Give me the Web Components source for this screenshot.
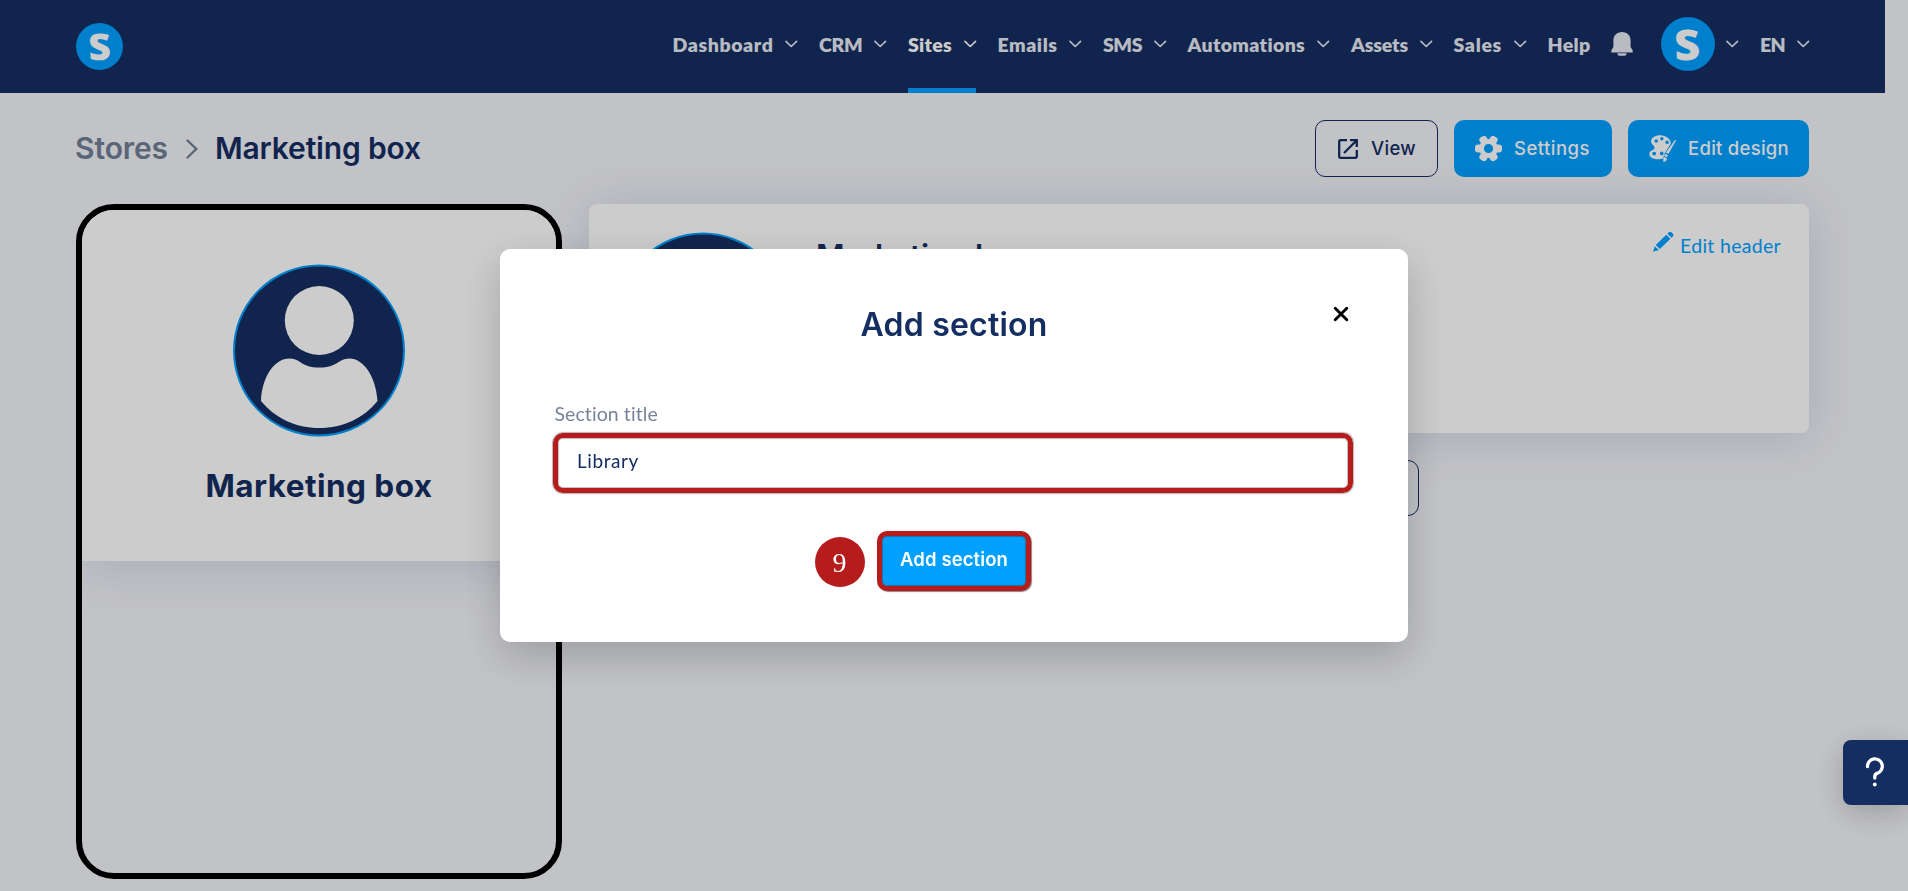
<!DOCTYPE html>
<html lang="en">
<head>
<meta charset="UTF-8">
<title>Marketing box</title>
<style>
    body {
        margin: 0;
        height: 891px;
        overflow: hidden;
        background: #f3f4f9;
        color: #152e62;
        font-family: Inter, sans-serif;
        --navy: #152e62;
        --blue: #00a0ff;
        --red: #b71c1c;
        --round-font: Lato, sans-serif;
    }
</style>
</head>
<body>
<store-page></store-page>
<page-backdrop></page-backdrop>
<section-modal heading="Add section"></section-modal>
<help-tab></help-tab>

<script>
const ICONS = {
    chevron: '<svg viewBox="0 0 13 8"><path d="M1 1.2 6.5 6.6 12 1.2" fill="none" stroke="currentColor" stroke-width="1.7" stroke-linecap="round" stroke-linejoin="round"/></svg>',
    crumb: '<svg viewBox="0 0 12 20"><path d="M1.5 1.5 10.3 10 1.5 18.5" fill="none" stroke="currentColor" stroke-width="2.4" stroke-linecap="round"/></svg>',
    bell: '<svg viewBox="0 0 22 24"><path d="M11 0C6 0 2.4 3.5 2.4 8.5v6.5L0.3 18.5V20.5H21.7V18.5L19.6 15V8.5C19.6 3.5 16 0 11 0ZM6.3 21.3h9.4q-.1 2.5-2.3 2.5H8.6q-2.2 0-2.3-2.5Z" fill="currentColor"/></svg>',
    view: '<svg viewBox="0 0 20 20"><path d="M9 1.2H2.2Q1.2 1.2 1.2 2.2V17.8Q1.2 18.8 2.2 18.8H17.8Q18.8 18.8 18.8 17.8V11M12 1.2H18.8V8M18.3 1.7 6 14" fill="none" stroke="currentColor" stroke-width="2.3"/></svg>',
    gear: '<svg viewBox="0 0 27 26"><g fill="currentColor"><path fill-rule="evenodd" d="M13.5 3.5a9.5 9.5 0 1 0 0 19a9.5 9.5 0 0 0 0-19Zm0 4.9a4.6 4.6 0 1 1 0 9.2a4.6 4.6 0 0 1 0-9.2Z"/><rect x="0" y="9" width="7" height="8" rx="3"/><rect x="20" y="9" width="7" height="8" rx="3"/><rect x="0" y="9" width="7" height="8" rx="3" transform="rotate(60 13.5 13)"/><rect x="20" y="9" width="7" height="8" rx="3" transform="rotate(60 13.5 13)"/><rect x="0" y="9" width="7" height="8" rx="3" transform="rotate(-60 13.5 13)"/><rect x="20" y="9" width="7" height="8" rx="3" transform="rotate(-60 13.5 13)"/></g></svg>',
    palette: '<svg viewBox="0 0 28 28"><path fill="currentColor" fill-rule="evenodd" d="M11.5.3C6.5.3 2.2 2.8 2.2 6.7c0 3.5 3.6 4 3.6 6.5 0 2.6-5.5 2.6-5.5 6.5 0 3.5 4.5 5.5 9.5 5.5 2 0 3.5-.5 4.7-1.1L16 19.6l1.1-2 5.5-8.5C22.7 4 17.5.3 11.5.3ZM7.5 4.300a1.9 1.9 0 1 1 0 3.8a1.9 1.9 0 0 1 0-3.8Zm5.8-2.1a1.8 1.8 0 1 1 0 3.6a1.8 1.8 0 0 1 0-3.6Zm5.5 3.5a1.9 1.9 0 1 1 0 3.8a1.9 1.9 0 0 1 0-3.8ZM5.4 17.300a2 2 0 1 1 0 4a2 2 0 0 1 0-4Zm7.8-.1a1.9 1.9 0 1 1 0 3.8a1.9 1.9 0 0 1 0-3.8Z"/><path d="M27 5 28 5.7 20 19.7 17.6 18.2ZM17 19.4 19.5 21 18.6 23 15.6 21.5ZM15.2 22.5 18.4 24.2C19 26 17.6 28 14.6 27.8 15.5 26 14.3 24.5 15.2 22.5Z" fill="currentColor"/></svg>',
    pencil: '<svg viewBox="0 0 22 22"><path d="M16.3 1.6Q18 .1 19.6 1.5L20.8 2.8Q22.2 4.3 20.7 5.8L19.4 7.1 15 2.900ZM13.9 4 18.2 8.2 7.2 18.9 2.9 14.7ZM1.9 15.9 6.1 20 0 21.8Z" fill="currentColor"/></svg>',
    close: '<svg viewBox="0 0 16 16"><path d="M2.2 2.2 13.8 13.8M13.8 2.2 2.2 13.8" stroke="currentColor" stroke-width="2.9" stroke-linecap="round"/></svg>',
    help: '<svg viewBox="0 0 18 30"><path d="M1.5 9.500A7.4 7.4 0 1 1 11.5 16.2Q8.8 17 8.8 19.5V21" fill="none" stroke="currentColor" stroke-width="3.3" stroke-linecap="round"/><circle cx="8.8" cy="27.5" r="1.9" fill="currentColor"/></svg>'
};

class BaseElement extends HTMLElement {
    constructor() {
        super();
        this.attachShadow({ mode: 'open' });
    }

    connectedCallback() {
        this.shadowRoot.innerHTML = this.template();
    }
}

class UiIcon extends BaseElement {
    template() {
        return `
            <style>
                :host { display: block; flex: none; }
                svg { display: block; width: 100%; height: 100%; overflow: visible; }
            </style>
            ${ICONS[this.getAttribute('name')]}
        `;
    }
}

// One line of text, tracked so that it takes the given width
class FitText extends BaseElement {
    template() {
        return `
            <style>
                :host { display: block; flex: none; white-space: nowrap; }
                span { display: inline-block; }
            </style>
            <span><slot></slot></span>
        `;
    }

    connectedCallback() {
        super.connectedCallback();
        const width = Number(this.getAttribute('width'));
        const span = this.shadowRoot.querySelector('span');
        const count = this.textContent.length;
        const natural = span.getBoundingClientRect().width;
        span.style.letterSpacing = `${(width - natural) / count}px`;
        this.style.width = `${width}px`;
    }
}

class BrandMark extends BaseElement {
    template() {
        return `
            <style>
                :host {
                    display: flex;
                    flex: none;
                    align-items: center;
                    justify-content: center;
                    width: var(--size, 47px);
                    height: var(--size, 47px);
                    border-radius: 50%;
                    background: var(--blue);
                    color: #fff;
                    font: 800 calc(var(--size, 47px) * 0.78)/1 "Open Sans", sans-serif;
                }
                span { transform: skewX(3deg) scaleX(1.06); }
            </style>
            <span>S</span>
        `;
    }
}

class NavItem extends BaseElement {
    template() {
        return `
            <style>
                :host {
                    display: flex;
                    align-items: center;
                    gap: 11.5px;
                    height: 93px;
                    box-sizing: border-box;
                    color: #e6eaf2;
                    font: 800 19.5px/24px var(--round-font);
                }
                :host([active]) { color: #fff; box-shadow: inset 0 -5px var(--blue); }
                ::slotted(fit-text) { margin-top: -3px; }
                ui-icon { width: 12.5px; height: 8px; margin-top: -5px; }
            </style>
            <slot></slot>
            ${this.hasAttribute('plain') ? '' : '<ui-icon name="chevron"></ui-icon>'}
        `;
    }
}

class AppHeader extends BaseElement {
    template() {
        const items = [
            ['Dashboard', 101], ['CRM', 43.5], ['Sites', 44], ['Emails', 60], ['SMS', 39],
            ['Automations', 118], ['Assets', 57], ['Sales', 48.5], ['Help', 43]
        ];
        const links = items.map(([label, width]) => `
            <nav-item ${label === 'Sites' ? 'active' : ''} ${label === 'Help' ? 'plain' : ''}>
                <fit-text width="${width}">${label}</fit-text>
            </nav-item>`).join('');
        return `
            <style>
                :host {
                    display: flex;
                    align-items: center;
                    justify-content: space-between;
                    box-sizing: border-box;
                    width: 1885px;
                    height: 93px;
                    padding: 0 76px;
                    background: var(--navy);
                }
                nav { display: flex; align-items: center; gap: 21.5px; }
                .bell { width: 22px; height: 24px; margin: -5px 6px 0 -1px; color: #e6eaf2; }
                .avatar { --size: 54px; margin-top: -5px; }
            </style>
            <brand-mark></brand-mark>
            <nav>
                ${links}
                <ui-icon class="bell" name="bell"></ui-icon>
                <nav-item><brand-mark class="avatar"></brand-mark></nav-item>
                <nav-item><fit-text width="25">EN</fit-text></nav-item>
            </nav>
        `;
    }
}

class ActionButton extends BaseElement {
    template() {
        return `
            <style>
                :host {
                    display: flex;
                    align-items: center;
                    box-sizing: border-box;
                    height: 57px;
                    padding: 0 21px;
                    border-radius: 10px;
                    background: var(--blue);
                    color: #fff;
                    font: 500 18.5px/24px Inter, sans-serif;
                }
                :host([outline]) { border: 1px solid var(--navy); background: none; color: var(--navy); }
                ::slotted(fit-text) { margin-top: -2px; }
                ui-icon { width: 27px; height: 27px; margin-right: 12px; }
                :host([outline]) ui-icon { width: 20px; height: 20px; margin: 0 13px 0 1px; }
            </style>
            <ui-icon name="${this.getAttribute('icon')}"></ui-icon><slot></slot>
        `;
    }
}

class UserAvatar extends BaseElement {
    template() {
        return `
            <style>
                :host { display: block; flex: none; width: 172px; height: 173px; }
                svg { display: block; width: 100%; height: 100%; }
            </style>
            <svg viewBox="0 0 172 173">
                <circle cx="86" cy="86.5" r="85" fill="#152e62" stroke="#00a0ff" stroke-width="2"/>
                <circle cx="86.3" cy="56.5" r="34.5" fill="#fff"/>
                <path fill="#fff" d="M28 137C29 112 42 94 57 94.5C68 95 68 103.5 86.3 103.5S105 95 116 94.5C130 94 143 112 144.5 137C131 154 110 164 86.3 164S42 154 28 137Z"/>
            </svg>
        `;
    }
}

class ProfileCard extends BaseElement {
    template() {
        return `
            <style>
                :host {
                    display: block;
                    box-sizing: border-box;
                    height: 675px;
                    border: 6px solid #000;
                    border-radius: 38px;
                    overflow: hidden;
                }
                .card {
                    display: flex;
                    flex-direction: column;
                    align-items: center;
                    box-sizing: border-box;
                    height: 351px;
                    padding-top: 54px;
                    background: #fff;
                    box-shadow: 0 4px 50px rgba(21, 60, 98, 0.16);
                }
                h2 { margin: 30px 0 0; font: 700 31.5px/38px Inter, sans-serif; }
            </style>
            <div class="card">
                <user-avatar></user-avatar>
                <h2><fit-text width="227">Marketing box</fit-text></h2>
            </div>
        `;
    }
}

class StoreHeader extends BaseElement {
    template() {
        return `
            <style>
                :host {
                    display: flex;
                    align-items: flex-start;
                    box-sizing: border-box;
                    height: 229px;
                    padding: 28px;
                    border-radius: 8px;
                    background: #fff;
                    box-shadow: 0 4px 50px rgba(21, 60, 98, 0.16);
                }
                h2 { flex: 1; margin: 4.5px 0 0 27px; font: 600 31px/38px Inter, sans-serif; }
                a { display: flex; align-items: flex-start; gap: 6px; color: var(--blue); font: 400 19.5px/28px var(--round-font); }
                ui-icon { width: 21px; height: 21px; margin-top: -1px; }
            </style>
            <user-avatar></user-avatar>
            <h2><fit-text width="214">Marketing box</fit-text></h2>
            <a><ui-icon name="pencil"></ui-icon><fit-text width="101">Edit header</fit-text></a>
        `;
    }
}

class StorePage extends BaseElement {
    template() {
        return `
            <style>
                :host { display: block; }
                .bar { display: flex; align-items: flex-start; box-sizing: border-box; width: 1885px; height: 84px; margin-top: 27px; padding: 0 76px; }
                .crumbs { display: flex; flex: 1; align-items: center; height: 57px; margin-left: -1px; font: 600 30px/36px Inter, sans-serif; color: #718096; }
                .crumbs fit-text { margin-top: -2px; }
                .crumbs ui-icon { width: 12px; height: 20px; margin: 0 17px 0 18px; }
                .crumbs .here { color: var(--navy); }
                .actions { display: flex; gap: 16px; }
                .view { width: 123px; }
                .settings { width: 158px; }
                .design { width: 181px; }
                main { display: grid; grid-template-columns: 486px 1220px; gap: 27px; padding-left: 76px; }
                .right { display: flex; flex-direction: column; align-items: center; gap: 27px; }
                .add { width: 439px; height: 56px; box-sizing: border-box; border: 1px solid var(--navy); border-radius: 11px; }
                profile-card { position: relative; }
                store-header { align-self: stretch; }
            </style>
            <app-header></app-header>
            <div class="bar">
                <div class="crumbs">
                    <fit-text width="93">Stores</fit-text>
                    <ui-icon name="crumb"></ui-icon>
                    <fit-text class="here" width="206">Marketing box</fit-text>
                </div>
                <div class="actions">
                    <action-button class="view" icon="view" outline><fit-text width="45">View</fit-text></action-button>
                    <action-button class="settings" icon="gear"><fit-text width="76">Settings</fit-text></action-button>
                    <action-button class="design" icon="palette"><fit-text width="101">Edit design</fit-text></action-button>
                </div>
            </div>
            <main>
                <profile-card></profile-card>
                <div class="right">
                    <store-header></store-header>
                    <div class="add"></div>
                </div>
            </main>
        `;
    }
}

class PageBackdrop extends BaseElement {
    template() {
        return '<style>:host { position: fixed; inset: 0; background: rgba(0, 0, 0, 0.2); }</style>';
    }
}

class SectionModal extends BaseElement {
    template() {
        return `
            <style>
                :host { position: fixed; inset: 0; display: flex; align-items: center; justify-content: center; }
                .dialog {
                    position: relative;
                    display: flex;
                    flex-direction: column;
                    align-items: center;
                    box-sizing: border-box;
                    width: 908px;
                    height: 393px;
                    padding: 55px 52px 0;
                    border-radius: 10px;
                    background: #fff;
                    box-shadow: 0 14px 40px rgba(0, 0, 0, 0.2);
                }
                ui-icon { position: absolute; top: 57px; right: 59px; width: 16px; height: 16px; color: #000; }
                h1 { margin: 0; font: 600 32px/42px Inter, sans-serif; }
                label { align-self: flex-start; margin: 54px 0 0 2.5px; color: #77839a; font: 400 19.5px/28px var(--round-font); }
                .field {
                    align-self: stretch;
                    display: flex;
                    box-sizing: border-box;
                    height: 60px;
                    margin: 5px 3px 0 1px;
                    padding: 10px 19px 0;
                    border: 5px solid var(--red);
                    border-radius: 10px;
                    box-shadow: 0 0 1px 1px rgba(70, 70, 70, 0.4), inset 0 0 1px 1px rgba(70, 70, 70, 0.35);
                    font: 400 19px/26px var(--round-font);
                }
                .row { display: flex; align-items: center; gap: 12px; margin: 38px 117px 0 0; padding-left: 54px; }
                .step {
                    width: 50px;
                    height: 50px;
                    margin-top: 1px;
                    border-radius: 50%;
                    background: var(--red);
                    color: #fff;
                    text-align: center;
                    font: 400 28px/51px "Liberation Serif", serif;
                }
                .submit {
                    display: flex;
                    justify-content: center;
                    box-sizing: border-box;
                    width: 154px;
                    height: 60px;
                    padding: 10px 0 0 1px;
                    border: 5px solid var(--red);
                    border-radius: 10px;
                    background: var(--blue);
                    box-shadow: 1px 1px 1px rgba(50, 50, 50, 0.6), inset 0 0 1px 1px rgba(60, 60, 60, 0.45);
                    color: #fff;
                    font: 600 18.5px/26px Inter, sans-serif;
                }
            </style>
            <div class="dialog">
                <ui-icon name="close"></ui-icon>
                <h1><fit-text width="187">${this.getAttribute('heading')}</fit-text></h1>
                <label><fit-text width="104">Section title</fit-text></label>
                <div class="field"><fit-text width="62">Library</fit-text></div>
                <div class="row">
                    <div class="step">9</div>
                    <div class="submit"><fit-text width="108">Add section</fit-text></div>
                </div>
            </div>
        `;
    }
}

class HelpTab extends BaseElement {
    template() {
        return `
            <style>
                :host {
                    position: fixed;
                    top: 740px;
                    right: 0;
                    display: flex;
                    align-items: center;
                    justify-content: center;
                    width: 65px;
                    height: 65px;
                    border-radius: 8px 0 0 8px;
                    background: var(--navy);
                    box-shadow: 0 8px 30px rgba(0, 0, 0, 0.2);
                    color: #fff;
                }
                ui-icon { width: 18px; height: 30px; margin: -1px 1px 0 0; }
            </style>
            <ui-icon name="help"></ui-icon>
        `;
    }
}

customElements.define('ui-icon', UiIcon);
customElements.define('fit-text', FitText);
customElements.define('brand-mark', BrandMark);
customElements.define('nav-item', NavItem);
customElements.define('app-header', AppHeader);
customElements.define('action-button', ActionButton);
customElements.define('user-avatar', UserAvatar);
customElements.define('profile-card', ProfileCard);
customElements.define('store-header', StoreHeader);
customElements.define('store-page', StorePage);
customElements.define('page-backdrop', PageBackdrop);
customElements.define('section-modal', SectionModal);
customElements.define('help-tab', HelpTab);
</script>
</body>
</html>
